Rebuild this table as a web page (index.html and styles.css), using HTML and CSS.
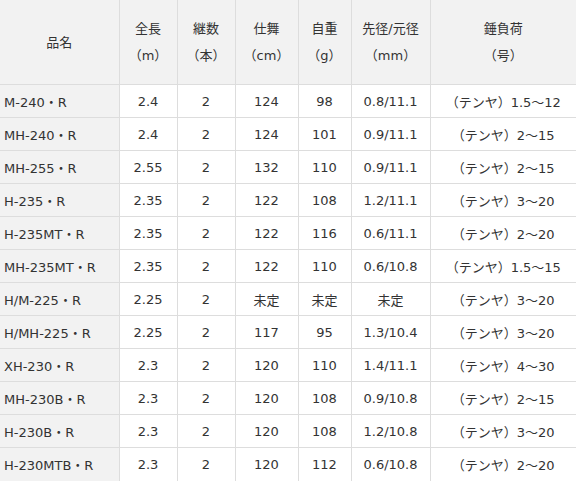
FILE: index.html
```html
<!DOCTYPE html>
<html lang="ja">
<head>
<meta charset="utf-8">
<link rel="stylesheet" href="styles.css">
</head>
<body>
<table class="spec">
<colgroup>
<col class="c1"><col class="c2"><col class="c3"><col class="c4"><col class="c5"><col class="c6"><col class="c7">
</colgroup>
<thead>
<tr>
<th>品名</th>
<th>全長<br>（m）</th>
<th>継数<br>（本）</th>
<th>仕舞<br>（cm）</th>
<th>自重<br>（g）</th>
<th>先径/元径<br>（mm）</th>
<th>錘負荷<br>（号）</th>
</tr>
</thead>
<tbody>
<tr><th>M-240・R</th><td>2.4</td><td>2</td><td>124</td><td>98</td><td>0.8/11.1</td><td>（テンヤ）1.5～12</td></tr>
<tr><th>MH-240・R</th><td>2.4</td><td>2</td><td>124</td><td>101</td><td>0.9/11.1</td><td>（テンヤ）2～15</td></tr>
<tr><th>MH-255・R</th><td>2.55</td><td>2</td><td>132</td><td>110</td><td>0.9/11.1</td><td>（テンヤ）2～15</td></tr>
<tr><th>H-235・R</th><td>2.35</td><td>2</td><td>122</td><td>108</td><td>1.2/11.1</td><td>（テンヤ）3～20</td></tr>
<tr><th>H-235MT・R</th><td>2.35</td><td>2</td><td>122</td><td>116</td><td>0.6/11.1</td><td>（テンヤ）2～20</td></tr>
<tr><th>MH-235MT・R</th><td>2.35</td><td>2</td><td>122</td><td>110</td><td>0.6/10.8</td><td>（テンヤ）1.5～15</td></tr>
<tr><th>H/M-225・R</th><td>2.25</td><td>2</td><td>未定</td><td>未定</td><td>未定</td><td>（テンヤ）3～20</td></tr>
<tr><th>H/MH-225・R</th><td>2.25</td><td>2</td><td>117</td><td>95</td><td>1.3/10.4</td><td>（テンヤ）3～20</td></tr>
<tr><th>XH-230・R</th><td>2.3</td><td>2</td><td>120</td><td>110</td><td>1.4/11.1</td><td>（テンヤ）4～30</td></tr>
<tr><th>MH-230B・R</th><td>2.3</td><td>2</td><td>120</td><td>108</td><td>0.9/10.8</td><td>（テンヤ）2～15</td></tr>
<tr><th>H-230B・R</th><td>2.3</td><td>2</td><td>120</td><td>108</td><td>1.2/10.8</td><td>（テンヤ）3～20</td></tr>
<tr><th>H-230MTB・R</th><td>2.3</td><td>2</td><td>120</td><td>112</td><td>0.6/10.8</td><td>（テンヤ）2～20</td></tr>
</tbody>
</table>
</body>
</html>
```
FILE: styles.css
```css
html, body {
  margin: 0;
  padding: 0;
  background: #fff;
}
.spec {
  width: 576px;
  border-collapse: collapse;
  table-layout: fixed;
  font-family: "DejaVu Sans", "Noto Sans CJK JP", sans-serif;
  font-size: 13px;
  color: #333;
}
.c1 { width: 119px; }
.c2 { width: 58px; }
.c3 { width: 58px; }
.c4 { width: 63px; }
.c5 { width: 53px; }
.c6 { width: 79px; }
.c7 { width: 146px; }
.spec th, .spec td {
  border: 1px solid #ddd;
  padding: 0 1px;
  font-weight: normal;
  text-align: center;
  vertical-align: middle;
  white-space: nowrap;
  overflow: hidden;
}
.spec thead th {
  background: #f2f2f2;
  height: 84px;
  line-height: 27px;
  border-top: none;
}
.spec tbody th {
  background: #f2f2f2;
  text-align: left;
  padding-left: 4px;
}
.spec tbody tr {
  height: 33px;
}
.spec tr > :first-child { border-left: none; }
.spec tr > :last-child { border-right: none; }
.spec tbody tr:last-child > * { border-bottom: none; }
```
